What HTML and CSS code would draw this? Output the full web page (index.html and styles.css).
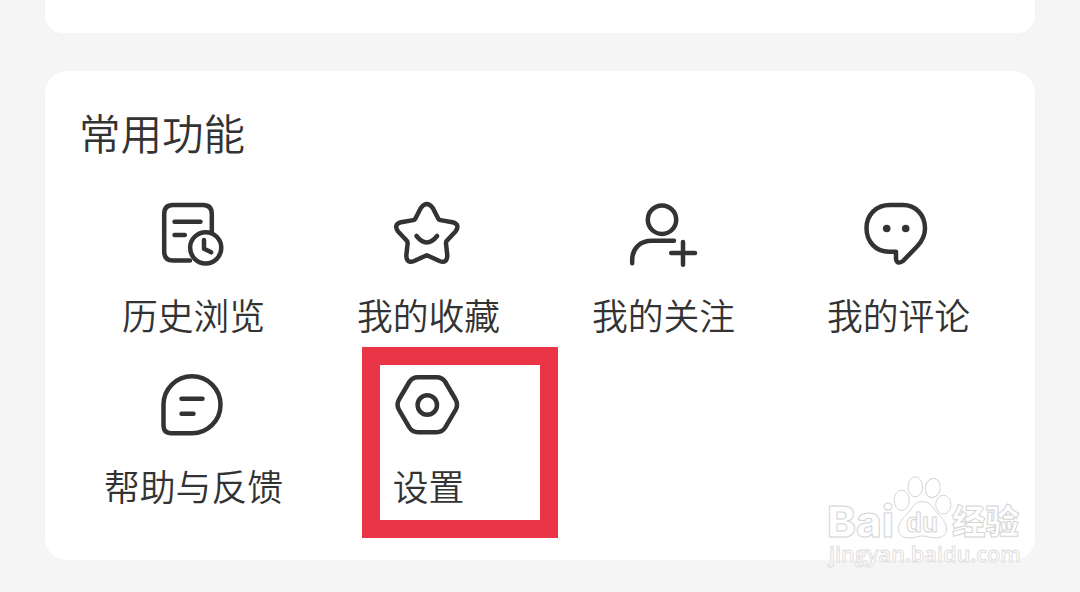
FILE: index.html
```html
<!DOCTYPE html>
<html lang="zh-CN">
<head>
    <meta charset="UTF-8">
    <meta name="viewport" content="width=device-width, initial-scale=1.0">
    <title>常用功能</title>
    <link rel="stylesheet" href="styles.css">
</head>
<body>
    <div class="card card-top"></div>
    <div class="card card-main">
        <h2>常用功能</h2>
        <div class="menu">
            <div class="item">
                <svg class="icon" viewBox="18 8 74 74">
                    <path d="M50 70.5H33Q24.2 70.5 24.2 61.5V24Q24.2 15 33 15H63Q71.8 15 71.8 24V42"/>
                    <path d="M34.5 31.7H60.5M34.5 45H44.8"/>
                    <circle cx="65.7" cy="57.8" r="15.6"/>
                    <path d="M64 50V58.8L71.2 62.3"/>
                </svg>
                <span>历史浏览</span>
            </div>
            <div class="item">
                <svg class="icon" viewBox="18 8 74 74">
                    <path d="M45.8 18Q51.8 10 57.8 18L63.2 28.5Q63.8 29.8 65.4 30.1L77.5 32.2Q85.5 34.5 80.5 41.5L71.8 50.8Q70.8 52 71 53.8L72.3 65.5Q72 74 64.5 71L51.8 65.2L39.1 71Q31.6 74 31.3 65.5L32.6 53.8Q32.8 52 31.8 50.8L23.1 41.5Q18.1 34.5 26.1 32.2L38.2 30.1Q39.8 29.8 40.4 28.5Z"/>
                    <path d="M41.5 46Q51.8 58.8 62.1 46"/>
                </svg>
                <span>我的收藏</span>
            </div>
            <div class="item">
                <svg class="icon" viewBox="18 8 74 74">
                    <circle cx="52" cy="29.7" r="14.2"/>
                    <path d="M22.2 73.2V70C22.2 58.5 30 50.8 42 50.8H64"/>
                    <path d="M61.2 63H85M73 52V74.8"/>
                </svg>
                <span>我的关注</span>
            </div>
            <div class="item">
                <svg class="icon" viewBox="18 8 74 74">
                    <path d="M51 61.7V69Q52 75 58 71L72.5 56C77.5 50.5 80 45 80 38.5C80 24 70 15 58 15H45C31 15 21.5 25 21.5 38C21.5 52 31 61.7 44 61.7Z"/>
                    <circle class="dot" cx="41.7" cy="38.5" r="3.8"/>
                    <circle class="dot" cx="60.7" cy="38.5" r="3.8"/>
                </svg>
                <span>我的评论</span>
            </div>
            <div class="item">
                <svg class="icon" viewBox="18 8 74 74">
                    <path d="M23.5 43.7A28.5 28.5 0 1 1 52 72.2H31Q23.5 72.2 23.5 64.5Z"/>
                    <path d="M41.5 37.8H62.5M41.5 52.7H53.5"/>
                </svg>
                <span>帮助与反馈</span>
            </div>
            <div class="item">
                <svg class="icon" viewBox="18 8 74 74">
                    <path d="M43 16.2H61.6Q67.3 16.2 70.3 21L80.6 38.5Q83.4 43.7 80.6 48.9L70.3 66.4Q67.3 71.2 61.6 71.2H43Q37.3 71.2 34.3 66.4L24 48.9Q21.2 43.7 24 38.5L34.3 21Q37.3 16.2 43 16.2Z"/>
                    <circle cx="52.3" cy="44" r="9.7"/>
                </svg>
                <span>设置</span>
            </div>
        </div>
    </div>

    <div class="highlight"></div>

    <svg class="watermark" viewBox="0 0 220 120">
        <text class="brand" x="17" y="77" textLength="67" lengthAdjust="spacingAndGlyphs">Bai</text>
        <ellipse cx="91.7" cy="40.3" rx="7.6" ry="10.2"/>
        <ellipse cx="105.3" cy="26.8" rx="7.2" ry="10"/>
        <ellipse cx="122.7" cy="28" rx="7.5" ry="9.6" transform="rotate(10 122.7 28)"/>
        <ellipse cx="133.3" cy="44.7" rx="7.6" ry="9.4"/>
        <path d="M112.5 41.5C121 41.5 123 49 129 55C139 64 139 76 129 77.5C121 79 119 76 112.5 76C106 76 104 79 96 77.5C86 76 86 64 96 55C102 49 104 41.5 112.5 41.5Z"/>
        <text class="du" x="96" y="72" textLength="32" lengthAdjust="spacingAndGlyphs">du</text>
        <text class="cn" x="142" y="74" textLength="67" lengthAdjust="spacingAndGlyphs">经验</text>
        <text class="site" x="19" y="102" textLength="192" lengthAdjust="spacingAndGlyphs">jingyan.baidu.com</text>
    </svg>
</body>
</html>
```
FILE: styles.css
```css
* {
    box-sizing: border-box;
}
body {
    margin: 0;
    height: 592px;
    overflow: hidden;
    position: relative;
    font-family: "Noto Sans CJK SC", sans-serif;
    background-color: #f5f5f5;
    color: #333;
}
.card {
    width: 990px;
    margin: 0 auto;
    background: #fff;
}
.card-top {
    height: 33px;
    border-radius: 0 0 18px 18px;
}
.card-main {
    height: 489px;
    margin-top: 38px;
    padding: 30px 19px 0 31px;
    border-radius: 22px;
}
h2 {
    margin: 0 0 34px 3px;
    font-size: 41.5px;
    font-weight: 350;
    line-height: 63px;
}
.menu {
    display: grid;
    grid-template-columns: repeat(4, 235px);
    grid-auto-rows: 170.5px;
}
.item {
    display: flex;
    flex-direction: column;
    align-items: center;
    font-size: 35.8px;
    font-weight: 350;
    line-height: 54px;
}
.item span {
    margin-top: 15px;
}
.icon {
    width: 74px;
    height: 74px;
    margin-left: 2px;
    fill: none;
    stroke: #333;
    stroke-width: 4.5;
    stroke-linecap: round;
    stroke-linejoin: round;
}
.icon .dot {
    fill: #333;
    stroke: none;
}
.highlight {
    position: absolute;
    left: 362px;
    top: 347px;
    width: 196px;
    height: 191px;
    border: 18px solid #ea3447;
}
.watermark {
    position: absolute;
    left: 810px;
    top: 460px;
    width: 220px;
    height: 120px;
    fill: #fff;
    stroke: #d4d4d4;
    stroke-width: 1;
}
.watermark text {
    font-family: "Liberation Sans", "Noto Sans CJK SC", sans-serif;
    font-weight: bold;
}
.watermark .brand {
    font-family: Inter, sans-serif;
    font-size: 43px;
    font-weight: 800;
}
.watermark .du {
    font-size: 27px;
}
.watermark .cn {
    font-size: 34px;
    font-weight: 900;
}
.watermark .site {
    font-family: "Open Sans", sans-serif;
    font-size: 22px;
    font-weight: 600;
    stroke: #dedede;
}
```
